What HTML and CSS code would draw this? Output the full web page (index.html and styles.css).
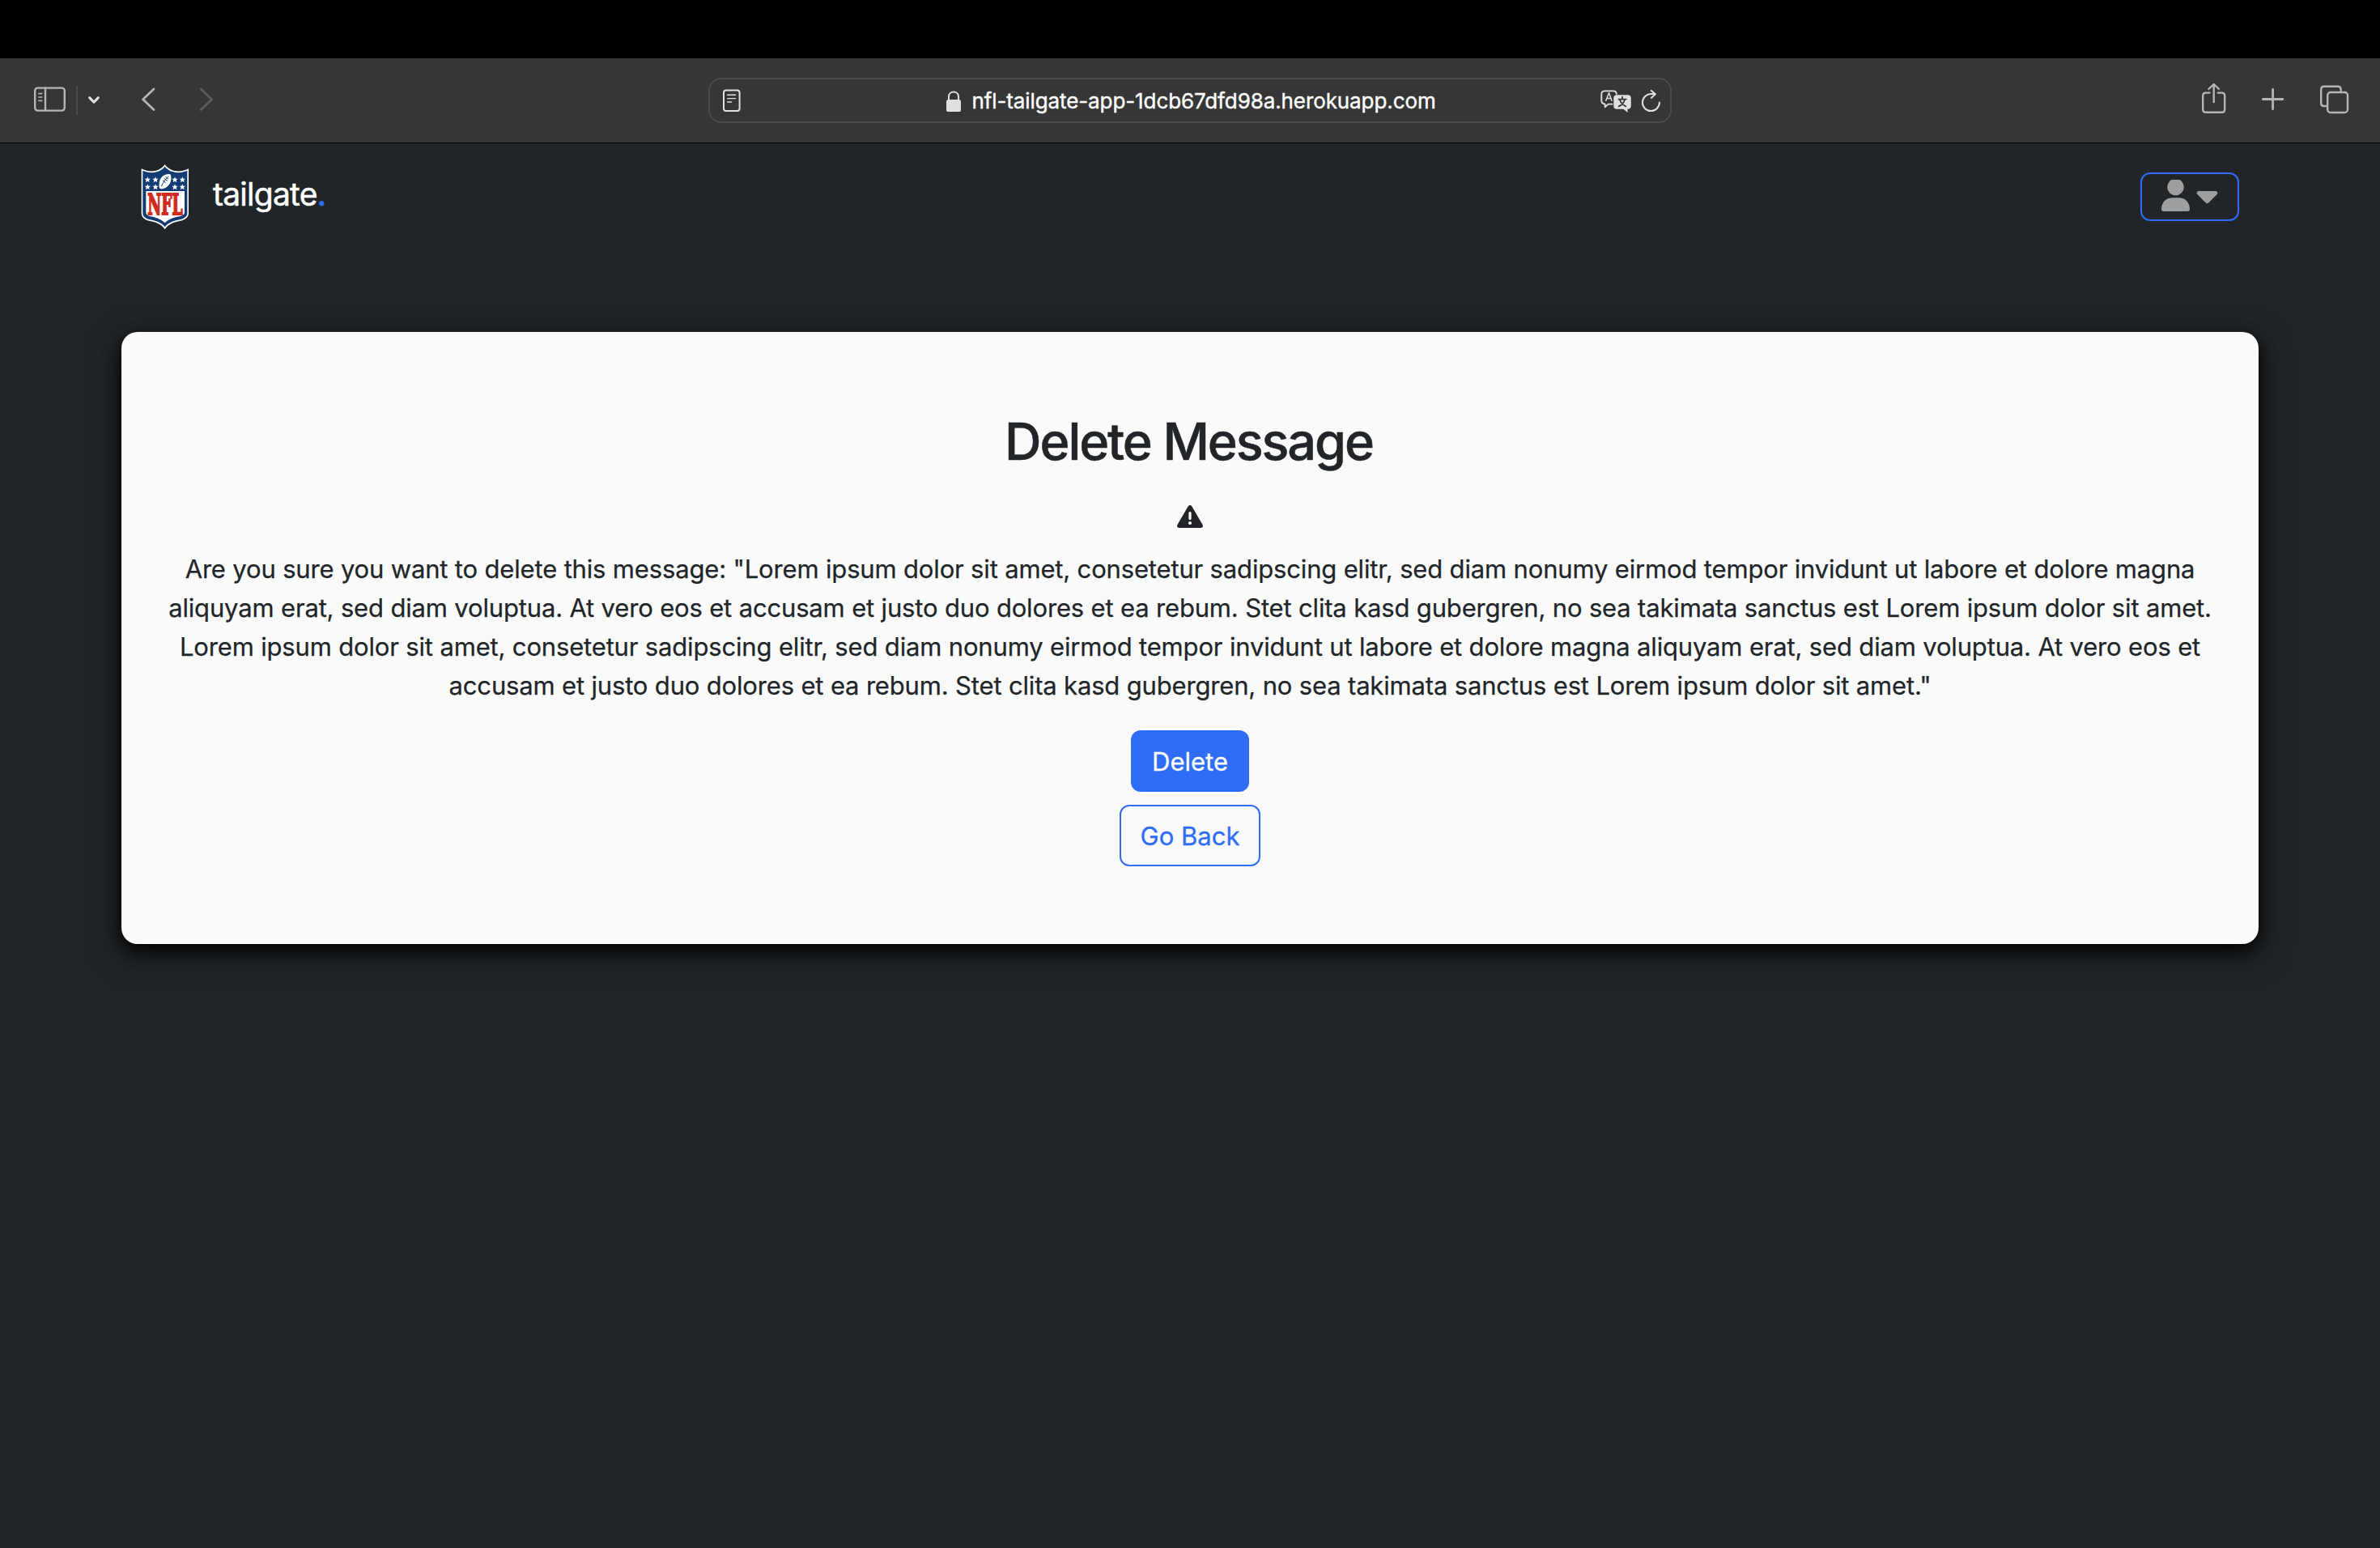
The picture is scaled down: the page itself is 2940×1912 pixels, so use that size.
FILE: index.html
```html
<!DOCTYPE html>
<html lang="en">
<head>
<meta charset="utf-8">
<title>tailgate.</title>
<link rel="stylesheet" href="styles.css">
</head>
<body>
<div class="screen-top"></div>
<div class="toolbar">
  <div class="tools tools-left">
    <svg class="icon" width="44" height="48" viewBox="40 100 44 48"><g stroke-width="2.4"><rect x="43.2" y="108.6" width="36.6" height="28" rx="3.5"/><path d="M56 108.6v28"/></g><path stroke-width="1.6" d="M47.8 115.6h4M47.8 120h4M47.8 124.4h4"/></svg>
    <span class="divider"></span>
    <svg class="icon bright" width="18" height="48" viewBox="107 100 18 48"><path stroke-width="3" d="M110.6 120.6l5.4 5.6 5.4-5.6"/></svg>
    <svg class="icon back" width="20" height="48" viewBox="173 100 20 48"><path stroke-width="2.8" d="M190 110l-13.4 12.8 13.4 12.8"/></svg>
    <svg class="icon forward" width="20" height="48" viewBox="245 100 20 48"><path stroke-width="2.8" d="M248.2 110l13.4 12.8-13.4 12.8"/></svg>
  </div>
  <div class="address">
    <svg class="icon light" width="26" height="48" viewBox="891 100 26 48"><rect x="894" y="111.6" width="19.6" height="25.4" rx="3" stroke-width="2"/><path stroke-width="1.4" d="M898.6 117.2h10M898.6 121.6h10M898.6 126h5"/></svg>
    <div class="site">
      <svg class="icon light" width="20" height="48" viewBox="1169 100 20 48"><rect x="1170" y="123" width="18" height="15" rx="2.6" class="solid"/><path stroke-width="2" d="M1173 124v-4.4c0-8 12-8 12 0v4.4"/></svg>
      <span class="url">nfl-tailgate-app-1dcb67dfd98a.herokuapp.com</span>
    </div>
    <div class="actions">
      <svg class="icon light" width="40" height="48" viewBox="1977 100 40 48"><path stroke-width="1.9" d="M1992.6 128.6l-5 0-4 3.6v-3.8c-3.2-.2-4.3-1.8-4.3-4.2v-7.6c0-2.8 1.4-4.2 4.2-4.2h10.4c2.4 0 3.7 1 4 3.4"/><path stroke-width="1.5" d="M1984.8 124.2l3.7-9.4 3.5 9.4M1986 121.4h5"/><path class="solid" d="M1998.5 117.2h13c2.8 0 4.3 1.5 4.3 4.3v9.3c0 2.6-1.3 3.9-4.3 4v4.2l-5-4.2h-8c-2.8 0-4.2-1.4-4.2-4v-9.3c0-2.8 1.4-4.3 4.2-4.3z"/><path class="ink" stroke-width="1.7" d="M2005 119.6v2.6M2000.4 122.6h9.4M2008 123c-.8 3.6-3.8 6.8-7.4 8.4M2002 123c.9 3.7 3.9 6.7 7.4 8.4"/></svg>
      <svg class="icon light" width="26" height="48" viewBox="2028 100 26 48"><path stroke-width="2" d="M2050.9 126.6a10.5 10.5 0 1 1-10.5-10.5h5"/><path stroke-width="2" d="M2040.6 111.8l5.2 4.5-5 4.6"/></svg>
    </div>
  </div>
  <div class="tools tools-right">
    <svg class="icon" width="34" height="48" viewBox="2718 100 34 48"><g stroke-width="2.4"><path d="M2729.6 114.6h-4.6c-2.6 0-3.8 1.2-3.8 3.8v16.6c0 2.6 1.2 3.8 3.8 3.8h19.4c2.6 0 3.8-1.2 3.8-3.8v-16.6c0-2.6-1.2-3.8-3.8-3.8h-4.6"/><path d="M2734.7 126v-22M2728.4 110l6.3-6 6.3 6"/></g></svg>
    <svg class="icon" width="30" height="48" viewBox="2793 100 30 48"><path stroke-width="2.8" d="M2795.4 122.5h24.4M2807.6 110.3v24.4"/></svg>
    <svg class="icon" width="38" height="48" viewBox="2864 100 38 48"><g stroke-width="2.4"><path d="M2874 131h-3.2c-2.4 0-3.6-1.2-3.6-3.6v-16.8c0-2.6 1.2-3.8 3.8-3.8h17c2.4 0 3.6 1.2 3.6 3.6v3"/><rect x="2875.2" y="114" width="24.8" height="25" rx="3.8"/></g></svg>
  </div>
</div>
<header class="navbar">
  <a class="brand">
    <svg class="shield" width="60" height="82" viewBox="18 13 180 246" role="img">
      <path fill="#fff" d="M107 16C99 28 88 35 75 39C56 44 36 41 20 32V196C20 213 32 222 52 226C78 231 96 240 107 257C118 240 136 231 162 226C182 222 195 213 195 196V32C179 41 158 44 139 39C126 35 115 28 107 16Z"/>
      <path fill="#123a73" d="M107 24C98 35 88 41 76 44C58 49 40 46 25 39V195C25 209 35 217 53 221C79 226 96 234 107 248C118 234 135 226 161 221C179 217 190 209 190 195V39C175 46 156 49 138 44C126 41 116 35 107 24Z"/>
      <path fill="#fff" d="M37 115H180V192C180 201 174 206 162 209C137 213 120 221 107 233C94 221 77 213 53 209C42 206 37 201 37 192Z"/>
      <g fill="#fff">
        <path id="star" d="M43 62l3 7 8 .5-6 5 2 8-7-4.500-7 4.500 2-8-6-5 8-.5z"/>
        <use href="#star" x="29"/><use href="#star" x="101"/><use href="#star" x="129"/>
        <use href="#star" y="27"/><use href="#star" x="29" y="27"/><use href="#star" x="101" y="27"/><use href="#star" x="129" y="27"/>
        <path d="M126 52C106 50 87 62 86 88C85 97 86 104 90 107C112 107 128 92 130 72C131 62 130 55 126 52Z"/>
      </g>
      <path fill="none" stroke="#123a73" stroke-width="3" d="M121 61C111 68 100 82 94 98M104 68l12 9M99 76l11 8M109 62l11 8"/>
      <text class="shield-text" transform="translate(43 202) scale(1 1.4)" textLength="130" lengthAdjust="spacingAndGlyphs">NFL</text>
    </svg>
    <span class="brand-name">tailgate<span class="dot">.</span></span>
  </a>
  <button class="account" aria-label="Account">
    <svg width="74" height="40" viewBox="2668 223 74 40"><circle cx="2687.5" cy="232" r="10.3"/><path d="M2670 259.5c0-8.500 5.500-14.200 13.500-14.200h8c8 0 13.500 5.700 13.500 14.200 0 1.600-.9 2.500-2.500 2.500h-30c-1.600 0-2.500-.9-2.500-2.500z"/><path d="M2716.4 237h20.200c2.700 0 3.600 2.600 1.900 4.300l-10 10c-1.300 1.200-2.700 1.200-4 0l-10-10c-1.700-1.700-.8-4.300 1.900-4.300z"/></svg>
  </button>
</header>
<main class="card">
  <h1 class="title">Delete Message</h1>
  <svg class="warning" width="32" height="28" viewBox="0 0 32 28"><path d="M13.600 1.400c1.100-1.900 3.700-1.900 4.800 0l13.100 22.600c1.100 1.900.1 4-2.100 4h-26.800c-2.200 0-3.200-2.100-2.100-4z"/><path class="mark" d="M16 9.600v7"/><circle class="mark-dot" cx="16" cy="22" r="2"/></svg>
  <p class="message">Are you sure you want to delete this message: "Lorem ipsum dolor sit amet, consetetur sadipscing elitr, sed diam nonumy eirmod tempor invidunt ut labore et dolore magna aliquyam erat, sed diam voluptua. At vero eos et accusam et justo duo dolores et ea rebum. Stet clita kasd gubergren, no sea takimata sanctus est Lorem ipsum dolor sit amet. Lorem ipsum dolor sit amet, consetetur sadipscing elitr, sed diam nonumy eirmod tempor invidunt ut labore et dolore magna aliquyam erat, sed diam voluptua. At vero eos et accusam et justo duo dolores et ea rebum. Stet clita kasd gubergren, no sea takimata sanctus est Lorem ipsum dolor sit amet."</p>
  <button class="btn btn-primary">Delete</button>
  <button class="btn btn-outline">Go Back</button>
</main>
</body>
</html>
```
FILE: styles.css
```css
* {
  box-sizing: border-box;
}

body {
  margin: 0;
  min-height: 1912px;
  background: #212529;
  color: #212529;
  font-family: Inter, "Liberation Sans", sans-serif;
}

svg {
  display: block;
  flex: none;
}

.screen-top {
  height: 72px;
  background: #000;
}

/* Browser toolbar */
.toolbar {
  display: grid;
  grid-template-columns: 1fr 1190px 1fr;
  align-items: center;
  height: 105px;
  background: #363636;
  border-bottom: 1px solid #000;
}

.tools {
  display: flex;
  align-items: center;
}

.tools-left {
  padding-left: 40px;
}

.tools-right {
  justify-content: flex-end;
  gap: 41px;
  padding-right: 38px;
}

.icon {
  fill: none;
  stroke: #b5b5b5;
  stroke-linecap: round;
  stroke-linejoin: round;
}

.icon .solid {
  fill: #e0e0e0;
  stroke: none;
}

.icon .ink {
  stroke: #363636;
}

.bright,
.light {
  stroke: #e0e0e0;
}

.divider {
  width: 2px;
  height: 36px;
  margin: 0 11px 0 10px;
  background: #4b4b4b;
}

.back {
  margin-left: 48px;
}

.forward {
  margin-left: 52px;
  stroke: #5c5c5c;
}

.address {
  display: grid;
  grid-template-columns: 1fr auto 1fr;
  align-items: center;
  height: 56px;
  padding: 0 10px 0 14px;
  border: 2px solid #4b4b4b;
  border-radius: 16px;
}

.site {
  display: flex;
  align-items: center;
  gap: 12px;
  margin-left: -2px;
}

.url {
  color: #fff;
  font-size: 26px;
  line-height: 31px;
  letter-spacing: -0.1px;
  white-space: nowrap;
  -webkit-text-stroke: 0.4px currentColor;
}

.actions {
  display: flex;
  justify-content: flex-end;
  gap: 11px;
}

/* Site header */
.navbar {
  display: flex;
  align-items: center;
  justify-content: space-between;
  height: 132px;
  margin: 0 174px;
}

.brand {
  display: flex;
  align-items: center;
  gap: 29px;
}

.brand-name {
  padding-bottom: 6px;
  color: #fff;
  font-size: 39px;
  line-height: 60px;
  letter-spacing: -0.75px;
  -webkit-text-stroke: 0.5px currentColor;
}

.dot {
  color: #2f6df6;
  -webkit-text-stroke: 1px currentColor;
}

.shield {
  overflow: visible;
}

.shield-text {
  fill: #cf2a20;
  stroke: #cf2a20;
  stroke-width: 4;
  font: bold 76px "DejaVu Serif", serif;
}

.account {
  display: flex;
  align-items: center;
  justify-content: center;
  width: 122px;
  height: 60px;
  padding: 0 0 2px;
  background: none;
  border: 2px solid #2f6df6;
  border-radius: 12px;
}

.account svg {
  fill: #9d9ea0;
}

/* Confirmation card */
.card {
  display: flex;
  flex-direction: column;
  align-items: center;
  margin: 101px 150px 0;
  padding: 96px 48px;
  background: #fafafa;
  border-radius: 20px;
  box-shadow: 0 8px 20px rgba(0, 0, 0, 0.9), 0 12px 40px rgba(0, 0, 0, 0.5);
}

.title {
  margin: 0;
  padding-right: 3px;
  font-size: 63px;
  font-weight: 500;
  line-height: 78px;
  letter-spacing: -2.1px;
  -webkit-text-stroke: 0.5px currentColor;
}

.warning {
  margin: 40px 0 27px;
  fill: #212529;
}

.warning .mark {
  stroke: #fafafa;
  stroke-width: 3.2;
  stroke-linecap: round;
}

.warning .mark-dot {
  fill: #fafafa;
}

.message {
  margin: 0 0 31px;
  font-size: 31px;
  line-height: 48px;
  letter-spacing: -0.165px;
  text-align: center;
  -webkit-text-stroke: 0.25px currentColor;
}

.btn {
  height: 76px;
  padding: 13px 24px 11px;
  border: 2px solid #2f6df6;
  border-radius: 12px;
  font: 400 31px/48px Inter, "Liberation Sans", sans-serif;
  -webkit-text-stroke: 0.3px currentColor;
}

.btn-primary {
  margin-bottom: 16px;
  background: #2f6df6;
  color: #fff;
}

.btn-outline {
  background: transparent;
  color: #2f6df6;
}
```
